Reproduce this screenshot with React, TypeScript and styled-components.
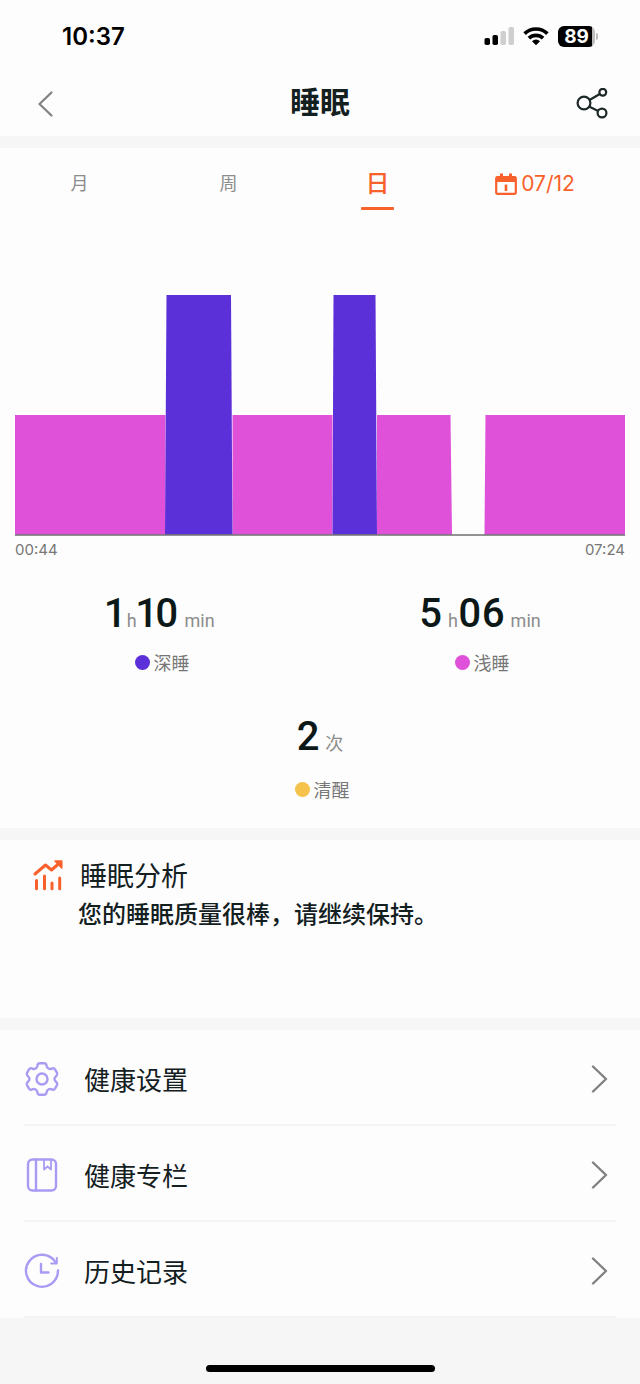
import React from "react";
import styled, { createGlobalStyle } from "styled-components";

const color = {
  panel: "#fdfdfd",
  page: "#f6f6f6",
  ink: "#13201f",
  muted: "#8c8c8c",
  accent: "#f9612c",
  deep: "#5c30d8",
  light: "#de51d8",
  awake: "#f5c24b",
  icon: "#a99bf3",
};

const cjk = `"Noto Sans CJK SC", sans-serif`;

const GlobalStyle = createGlobalStyle`
  *, *::before, *::after { box-sizing: border-box; }
  body { margin: 0; background: ${color.page}; font-family: Inter, ${cjk}; color: ${color.ink}; }
  h1, h2, p, ul { margin: 0; padding: 0; }
  button { border: 0; padding: 0; background: none; font: inherit; color: inherit; cursor: pointer; }
  svg { display: block; flex: none; }
`;

const Page = styled.div`
  display: flex;
  flex-direction: column;
  min-height: 100vh;
`;

const StatusBar = styled.div`
  display: flex;
  align-items: center;
  justify-content: space-between;
  height: 72px;
  padding: 0 42px 0 62px;
  background: ${color.panel};
`;

const Clock = styled.time`
  font-size: 24px;
  font-weight: 600;
  line-height: 32px;
  padding-top: 2px;
  color: #000;
`;

const StatusIcons = styled.div`
  display: flex;
  align-items: center;
  gap: 9px;
`;

const Battery = styled.div`
  display: flex;
  align-items: center;
  gap: 1px;
  &::after {
    content: "";
    width: 2px;
    height: 7px;
    border-radius: 0 2px 2px 0;
    background: #bdbdbd;
  }
`;

const BatteryLevel = styled.span`
  width: 37px;
  height: 21px;
  border-radius: 6px;
  background: linear-gradient(to right, #000 34px, #bdbdbd 34px);
  color: #fff;
  font-size: 19px;
  font-weight: 700;
  line-height: 21px;
  text-align: center;
`;

const NavBar = styled.header`
  display: grid;
  grid-template-columns: 1fr auto 1fr;
  align-items: center;
  height: 64px;
  padding: 0 32px;
  background: ${color.panel};
`;

const Title = styled.h1`
  font-family: ${cjk};
  font-size: 30px;
  font-weight: 700;
  line-height: 40px;
  padding-bottom: 8px;
`;

const IconButton = styled.button<{ $end?: boolean }>`
  justify-self: ${(p) => (p.$end ? "end" : "start")};
`;

const Panel = styled.section<{ $minHeight?: number }>`
  margin-top: 12px;
  min-height: ${(p) => p.$minHeight ?? 0}px;
  background: ${color.panel};
`;

const Tabs = styled.nav`
  display: grid;
  grid-template-columns: 149fr 149fr 149fr 166fr;
  height: 62px;
  padding: 0 22px 0 5px;
`;

const Tab = styled.button<{ $active?: boolean }>`
  display: flex;
  flex-direction: column;
  align-items: center;
  padding-top: 18px;
  font-family: ${cjk};
  font-size: ${(p) => (p.$active ? 24 : 18)}px;
  font-weight: ${(p) => (p.$active ? 500 : 400)};
  line-height: 32px;
  color: ${(p) => (p.$active ? color.accent : color.muted)};
  &::after {
    content: "";
    width: 33px;
    height: 3px;
    margin-top: 9px;
    border-radius: 1px;
    background: ${(p) => (p.$active ? color.accent : "transparent")};
  }
`;

const DateButton = styled.button`
  display: flex;
  align-items: center;
  justify-content: center;
  gap: 4px;
  height: 72px;
  font-size: 21px;
  line-height: 32px;
  color: ${color.accent};
`;

const Chart = styled.figure`
  margin: 85px 15px 0;
  svg { width: 100%; height: 241px; }
`;

const ChartTimes = styled.figcaption`
  display: flex;
  justify-content: space-between;
  margin-top: 4px;
  font-size: 15px;
  line-height: 20px;
  color: #777;
`;

const Stats = styled.div`
  display: grid;
  grid-template-columns: 1fr 1fr;
  row-gap: 43px;
  padding: 34px 0 27px;
`;

const Stat = styled.div<{ $wide?: boolean }>`
  display: flex;
  flex-direction: column;
  align-items: center;
  gap: ${(p) => (p.$wide ? 20 : 16)}px;
  grid-column: ${(p) => (p.$wide ? "1 / -1" : "auto")};
`;

const Value = styled.p`
  display: flex;
  align-items: baseline;
  height: 40px;
  font-family: Roboto, ${cjk};
  font-size: 40px;
  font-weight: 500;
  line-height: 40px;
  color: #0b1817;
  font-feature-settings: "pnum";
`;

const Unit = styled.span<{ $before?: number }>`
  margin-left: ${(p) => p.$before ?? 0}px;
  font-size: 18px;
  font-weight: 400;
  color: ${color.muted};
`;

const Legend = styled.p<{ $dot: string }>`
  display: flex;
  align-items: center;
  gap: 4px;
  padding-left: 4px;
  font-family: ${cjk};
  font-size: 18px;
  line-height: 24px;
  color: #777;
  &::before {
    content: "";
    width: 15px;
    height: 15px;
    border-radius: 50%;
    background: ${(p) => p.$dot};
  }
`;

const Analysis = styled.div`
  display: grid;
  grid-template-columns: 30px 1fr;
  column-gap: 16px;
  align-items: center;
  padding: 15px 32px;
  font-family: ${cjk};
`;

const AnalysisTitle = styled.h2`
  padding-left: 2px;
  font-size: 27px;
  font-weight: 400;
  line-height: 40px;
`;

const AnalysisText = styled.p`
  grid-column: 2;
  font-size: 24px;
  font-weight: 500;
  line-height: 36px;
`;

const Menu = styled.ul`
  padding: 0 24px;
  list-style: none;
`;

const MenuLink = styled.a`
  display: flex;
  align-items: center;
  gap: 24px;
  height: 96px;
  padding: 4px 8px 0 0;
  border-bottom: 2px solid #f4f4f4;
  font-family: ${cjk};
  font-size: 26px;
  line-height: 40px;
  color: ${color.ink};
  text-decoration: none;
`;

const MenuLabel = styled.span`
  flex: 1;
`;

const Footer = styled.footer`
  display: flex;
  flex: 1;
  align-items: flex-end;
  justify-content: center;
  min-height: 66px;
  padding-bottom: 12px;
  &::after {
    content: "";
    width: 229px;
    height: 7px;
    border-radius: 4px;
    background: #000;
  }
`;

const SignalIcon = () => (
  <svg width="30" height="20" viewBox="0 0 30 20" aria-hidden="true">
    <rect x="0.5" y="12" width="5.5" height="7" rx="1.8" fill="#000" />
    <rect x="8.5" y="9" width="5.5" height="10" rx="1.8" fill="#000" />
    <rect x="16.5" y="5" width="5.5" height="14" rx="1.8" fill="#cfcfcf" />
    <rect x="24.5" y="1" width="5.5" height="18" rx="1.8" fill="#cfcfcf" />
  </svg>
);

const WifiIcon = () => (
  <svg width="26" height="20" viewBox="0 0 26 20" fill="none" stroke="#000" strokeWidth="3.7" aria-hidden="true">
    <path d="M1.6 7.6a16.4 16.4 0 0 1 22.8 0" />
    <path d="M5.9 12.2a10.2 10.2 0 0 1 14.2 0" />
    <path d="M13 19.2l-4-4a5.8 5.8 0 0 1 8 0z" fill="#000" stroke="none" />
  </svg>
);

const BackIcon = () => (
  <svg width="26" height="28" viewBox="0 0 26 28" fill="none" stroke="#808080" strokeWidth="2.2" strokeLinecap="round" strokeLinejoin="round" aria-hidden="true">
    <path d="M19.5 2.5L7.5 14l12 11.5" />
  </svg>
);

const ShareIcon = () => (
  <svg width="32" height="32" viewBox="0 0 32 32" fill="none" stroke="#1c2827" strokeWidth="2.2" aria-hidden="true">
    <circle cx="8" cy="15" r="6.4" />
    <circle cx="26.8" cy="4.2" r="3.4" />
    <circle cx="26" cy="25" r="4.4" />
    <path d="M13.5 12L23.8 6M13 18.5l9.2 4.4" />
  </svg>
);

const CalendarIcon = () => (
  <svg width="22" height="22" viewBox="0 0 22 22" aria-hidden="true">
    <rect x="1.2" y="4" width="19.6" height="16.8" rx="1.6" fill="none" stroke={color.accent} strokeWidth="2.2" />
    <path d="M1 3.500h20V9H1zM5 .5h3v5H5zM14 .5h3v5h-3z" fill={color.accent} />
    <path d="M11 11.5v6.500" stroke={color.accent} strokeWidth="2.600" />
  </svg>
);

const TrendIcon = () => (
  <svg width="32" height="32" viewBox="0 0 32 32" fill="none" stroke={color.accent} strokeWidth="3" strokeLinecap="round" strokeLinejoin="round" aria-hidden="true">
    <path d="M3 15L13.500 6l6 5L27 4.500" />
    <path d="M23 2h6.800v7z" fill={color.accent} strokeWidth="1.500" />
    <path d="M4.500 21.500v8.300M12.500 17v12.800M20 24v5.800M27.700 19v10.800" />
  </svg>
);

const menuIcon = {
  width: 36,
  height: 36,
  viewBox: "0 0 36 36",
  fill: "none",
  stroke: color.icon,
  strokeWidth: 2.4,
  strokeLinecap: "round",
  strokeLinejoin: "round",
  "aria-hidden": true,
} as const;

const GearIcon = () => (
  <svg {...menuIcon}>
    <path d="M13.600 4Q14 2.200 15.800 2.200h4.400q1.800 0 2.200 1.800l.3 1.300q.4 1.500 1.700 2.200 1.300.8 2.800.3l1.200-.4q1.700-.5 2.600 1l2 3.500q.8 1.600-.4 2.800l-.9.900q-1.200 1-1.200 2.400t1.200 2.400l.9.900q1.200 1.200.4 2.800l-2 3.500q-.9 1.500-2.600 1l-1.200-.4q-1.500-.5-2.800.3-1.300.7-1.700 2.200l-.3 1.300q-.4 1.800-2.200 1.800h-4.400q-1.800 0-2.200-1.800l-.3-1.300q-.4-1.500-1.700-2.200-1.300-.8-2.800-.3l-1.200.4q-1.700.5-2.600-1l-2-3.500q-.8-1.600.4-2.800l.9-.9Q5.500 19.400 5.500 18t-1.200-2.400l-.9-.9q-1.200-1.200-.4-2.800l2-3.500q.9-1.500 2.600-1l1.200.4q1.500.5 2.800-.3 1.300-.7 1.700-2.200z" />
    <circle cx="18" cy="18" r="5.5" />
  </svg>
);

const BookIcon = () => (
  <svg {...menuIcon}>
    <rect x="4" y="2.5" width="28" height="31" rx="4.5" />
    <path d="M12 2.500v31" />
    <path d="M20 3v9.500l3.500-3 3.500 3V3" strokeWidth="1.8" />
  </svg>
);

const HistoryIcon = () => (
  <svg {...menuIcon}>
    <path d="M34 17.500A16 16 0 1 1 31.500 9.200" />
    <path d="M32.800 5v5.600h-5.600" strokeWidth="2" />
    <path d="M17 11v8.500h7.500" />
  </svg>
);

const ChevronIcon = () => (
  <svg width="17" height="28" viewBox="0 0 17 28" fill="none" stroke="#808080" strokeWidth="2.4" strokeLinecap="round" strokeLinejoin="round" aria-hidden="true">
    <path d="M2 1.500L15 14 2 26.500" />
  </svg>
);

const SleepGraph = () => (
  <svg viewBox="0 0 610 241" preserveAspectRatio="none" role="img" aria-label="睡眠">
    <g fill={color.light}>
      <path d="M0 120H150.500V240H0z" />
      <path d="M217.500 120H317.500V240H217.500z" />
      <path d="M362 120h73.500L437 240h-75z" />
      <path d="M470.500 120H610v120H469.500z" />
    </g>
    <g fill={color.deep}>
      <path d="M151.500 0h64.500l1.500 240h-67.500z" />
      <path d="M318.500 0h42l1.500 240h-44.500z" />
    </g>
    <path d="M0 240H610" stroke="#777" strokeOpacity=".8" strokeWidth="2" />
  </svg>
);

const menuItems = [
  { label: "健康设置", Icon: GearIcon },
  { label: "健康专栏", Icon: BookIcon },
  { label: "历史记录", Icon: HistoryIcon },
];

export default function App() {
  return (
    <>
      <GlobalStyle />
      <Page>
        <StatusBar>
          <Clock>10:37</Clock>
          <StatusIcons>
            <SignalIcon />
            <WifiIcon />
            <Battery>
              <BatteryLevel>89</BatteryLevel>
            </Battery>
          </StatusIcons>
        </StatusBar>
        <NavBar>
          <IconButton aria-label="返回">
            <BackIcon />
          </IconButton>
          <Title>睡眠</Title>
          <IconButton $end aria-label="分享">
            <ShareIcon />
          </IconButton>
        </NavBar>

        <Panel>
          <Tabs>
            <Tab>月</Tab>
            <Tab>周</Tab>
            <Tab $active aria-current="true">日</Tab>
            <DateButton>
              <CalendarIcon />
              07/12
            </DateButton>
          </Tabs>
          <Chart>
            <SleepGraph />
            <ChartTimes>
              <span>00:44</span>
              <span>07:24</span>
            </ChartTimes>
          </Chart>
          <Stats>
            <Stat>
              <Value>
                1<Unit $before={3}>h</Unit>10<Unit $before={6}>min</Unit>
              </Value>
              <Legend $dot={color.deep}>深睡</Legend>
            </Stat>
            <Stat>
              <Value>
                5<Unit $before={6}>h</Unit>06<Unit $before={6}>min</Unit>
              </Value>
              <Legend $dot={color.light}>浅睡</Legend>
            </Stat>
            <Stat $wide>
              <Value>
                2<Unit $before={6}>次</Unit>
              </Value>
              <Legend $dot={color.awake}>清醒</Legend>
            </Stat>
          </Stats>
        </Panel>

        <Panel $minHeight={178}>
          <Analysis>
            <TrendIcon />
            <AnalysisTitle>睡眠分析</AnalysisTitle>
            <AnalysisText>您的睡眠质量很棒，请继续保持。</AnalysisText>
          </Analysis>
        </Panel>

        <Panel>
          <Menu>
            {menuItems.map(({ label, Icon }) => (
              <li key={label}>
                <MenuLink href="#">
                  <Icon />
                  <MenuLabel>{label}</MenuLabel>
                  <ChevronIcon />
                </MenuLink>
              </li>
            ))}
          </Menu>
        </Panel>
        <Footer />
      </Page>
    </>
  );
}
